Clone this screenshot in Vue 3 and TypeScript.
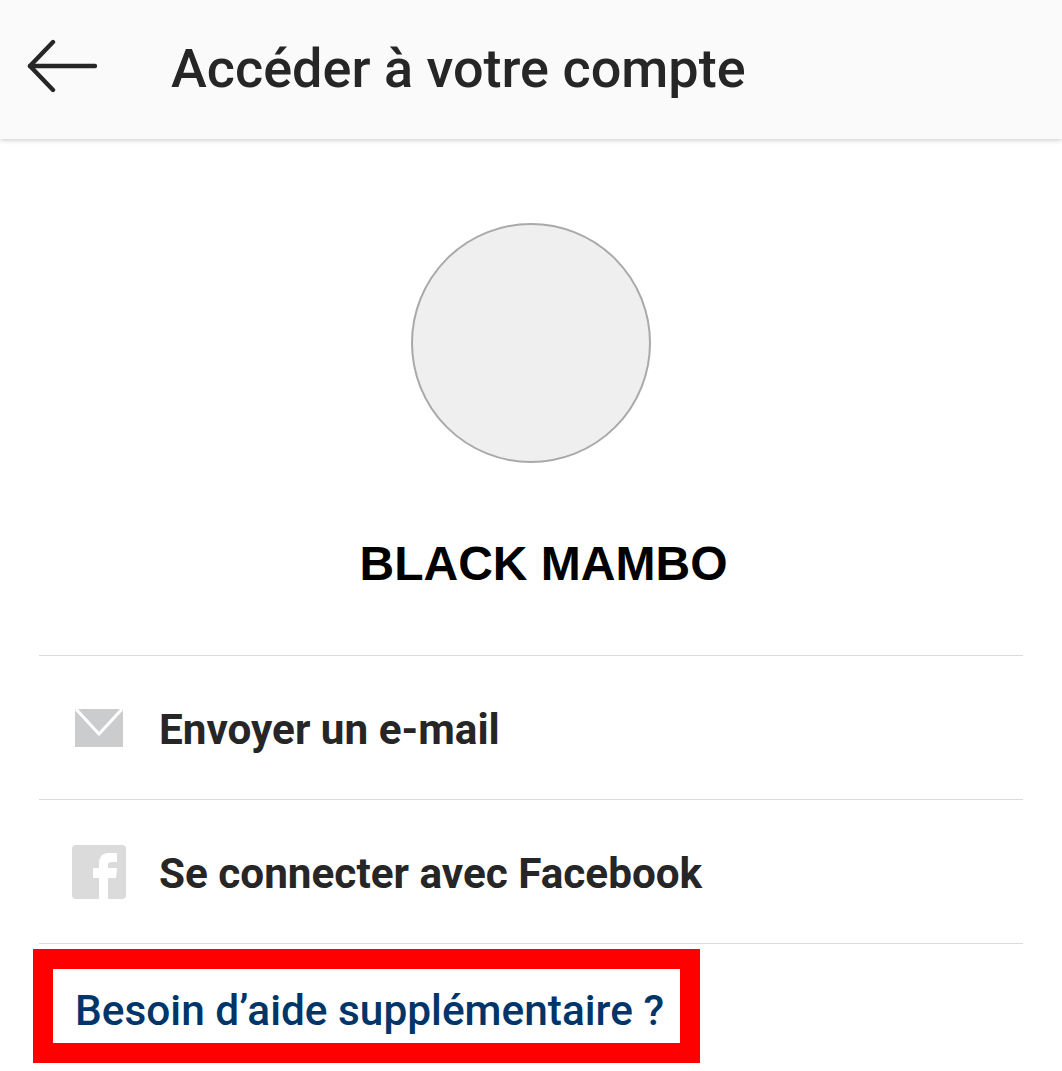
<script setup lang="ts">
const rows = [
  { id: 'mail', label: 'Envoyer un e-mail' },
  { id: 'fb', label: 'Se connecter avec Facebook' },
]
</script>

<template>
  <div class="page">
    <header class="bar">
      <svg class="back" width="72" height="54" viewBox="0 0 72 54" fill="none" stroke="#262626" stroke-width="4.4" stroke-linecap="round" stroke-linejoin="round">
        <path d="M26 3 L3 27 L26 51" />
        <path d="M3 27 H68" />
      </svg>
      <h1 class="title">Accéder à votre compte</h1>
    </header>

    <section class="profile">
      <div class="avatar"></div>
      <div class="name">BLACK MAMBO</div>
    </section>

    <div class="list">
      <div v-for="row in rows" :key="row.id" class="row">
        <span class="icon">
          <svg v-if="row.id === 'mail'" width="48" height="38" viewBox="0 0 48 38">
            <rect width="48" height="38" fill="#cbcccd" />
            <path d="M1 0 L24 25 L47 0" fill="none" stroke="#fff" stroke-width="3" />
          </svg>
          <svg v-else width="54" height="54" viewBox="0 0 54 54">
            <rect width="54" height="54" rx="4" fill="#dbdbdb" />
            <path d="M27 54 V33 H21 V23 H27 V18 C27 12 31 8 36 8 H45 V17 H39 C37 17 36 18 36 20 V23 H45 L44 33 H36 V54 Z" fill="#fff" />
          </svg>
        </span>
        <span class="label">{{ row.label }}</span>
      </div>
    </div>

    <div class="help"><span class="help-text">Besoin d’aide supplémentaire ?</span></div>
  </div>
</template>

<style scoped>
.page {
  width: 1062px;
  height: 1071px;
  background: #fff;
  overflow: hidden;
  font-family: Roboto, sans-serif;
}
.bar {
  height: 139px;
  background: #fafafa;
  box-shadow: 0 1px 5px rgba(0, 0, 0, 0.22);
  display: flex;
  align-items: center;
  padding-left: 27px;
  box-sizing: border-box;
}
.back {
  flex: none;
  align-self: flex-start;
  margin-top: 39px;
}
.title {
  margin: -2px 0 0 72px;
  font-size: 54px;
  font-weight: 500;
  color: #262626;
  white-space: nowrap;
}
.profile {
  display: flex;
  flex-direction: column;
  align-items: center;
  height: 516px;
  padding-top: 84px;
  box-sizing: border-box;
}
.avatar {
  width: 240px;
  height: 240px;
  box-sizing: border-box;
  border-radius: 50%;
  background: #efefef;
  border: 2px solid #a9a9a9;
}
.name {
  margin-top: 71px;
  margin-left: 25px;
  font-family: "Liberation Sans", Arial, sans-serif;
  font-weight: 700;
  font-size: 48px;
  line-height: 60px;
  color: #000;
}
.list {
  margin: 0 39px;
}
.row {
  height: 144px;
  box-sizing: border-box;
  border-top: 1px solid #dbdbdb;
  display: flex;
  align-items: center;
}
.row:last-child {
  border-bottom: 1px solid #dbdbdb;
  height: 145px;
}
.icon {
  width: 120px;
  display: flex;
  justify-content: center;
  flex: none;
}
.label {
  margin-top: 4px;
  font-size: 42.25px;
  font-weight: 700;
  color: #262626;
  white-space: nowrap;
}
.help {
  margin: 5px 0 0 33px;
  width: 667px;
  height: 114px;
  box-sizing: border-box;
  border: 20px solid #ff0000;
  background: #fff;
  display: flex;
  align-items: center;
  padding-left: 22px;
  font-size: 42.4px;
  font-weight: 500;
  color: #003569;
  white-space: nowrap;
}
.help-text {
  margin-top: 9px;
}
</style>

<style>
html, body {
  margin: 0;
  background: #fff;
}
</style>
